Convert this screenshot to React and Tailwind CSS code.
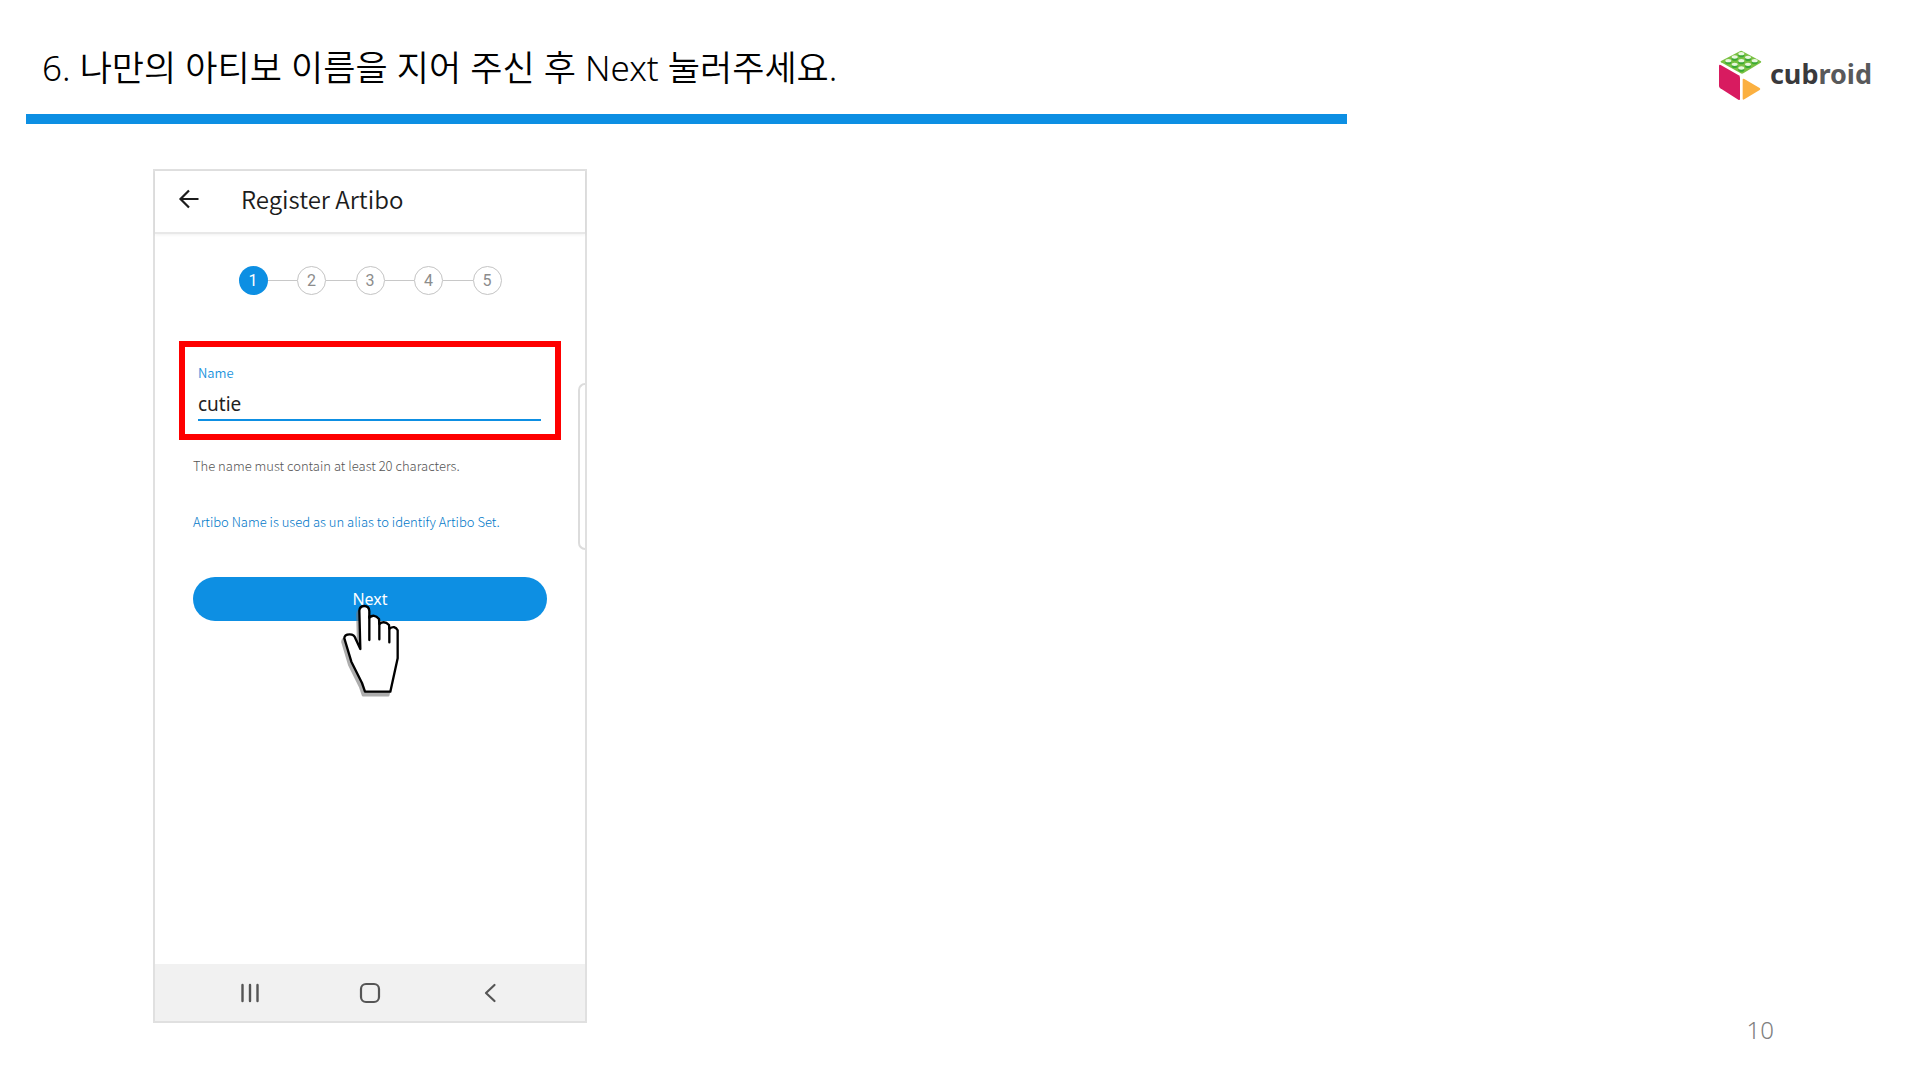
const STEPS = [1, 2, 3, 4, 5];

const CubroidLogo = () => (
  <div className="flex items-center gap-1">
    <svg viewBox="0 0 144 156" className="h-[52px] w-12" aria-hidden="true">
      <path d="M72 3 L129 34 Q131 36 128 38 L76 70 Q72 72 68 70 L9 37 Q6 35 9 33 L67 3 Q70 2 72 3 Z" fill="#7ac143" />
      {[[70, 11], [50, 21], [90, 22], [31, 32], [70, 32], [110, 32], [50, 43], [90, 43], [70, 54]].map(([x, y]) => (
        <g key={`${x}-${y}`}>
          <ellipse cx={x} cy={y + 5} rx="9" ry="6" fill="#39a935" />
          <ellipse cx={x} cy={y} rx="9" ry="5" fill="#e9f7df" />
        </g>
      ))}
      <path d="M8 45 L62 76 Q66 79 66 83 L66 147 Q66 152 61 149 L7 115 Q3 112 3 108 L3 48 Q3 43 8 45 Z" fill="#d81b60" />
      <path d="M79 87 L125 114 Q129 117 125 120 L79 148 Q74 151 74 146 L74 89 Q74 84 79 87 Z" fill="#fbb040" />
    </svg>
    <span className="pb-1 font-['Noto_Sans',sans-serif] text-[27px] leading-8 font-bold text-[#58595b]">
      <span className="text-[#3a3a3c]">cub</span>roid
    </span>
  </div>
);

const HandCursor = () => (
  <svg viewBox="0 0 180 285" className="pointer-events-none absolute top-[26px] left-[147px] h-[95px] w-[60px]" aria-hidden="true">
    <g strokeLinejoin="round" strokeLinecap="round" strokeWidth="7">
      <path
        d="M61 138 L58 23 Q59 9 73 9 Q87 9 88 24 L88 44 Q102 31 117 48 L118 63 Q133 51 147 66 L148 77 Q165 66 173 82 L173 166 L151 266 L75 266 L66 240 L34 176 L13 106 Q13 94 29 94 Q43 94 46 106 Z"
        transform="translate(-6 11)"
        fill="#777"
        stroke="#777"
        opacity="0.6"
      />
      <path
        d="M61 138 L58 23 Q59 9 73 9 Q87 9 88 24 L88 44 Q102 31 117 48 L118 63 Q133 51 147 66 L148 77 Q165 66 173 82 L173 166 L151 266 L75 266 L66 240 L34 176 L13 106 Q13 94 29 94 Q43 94 46 106 Z"
        fill="#fff"
        stroke="#000"
      />
      <path d="M88 40 V111 M118 58 V109 M148 74 V118" fill="none" stroke="#000" />
    </g>
  </svg>
);

/** Numbered circles joined by a thin line */
const Stepper = ({ current }) => (
  <ol className="mx-auto flex w-[263px] items-center font-[Roboto,sans-serif] text-base font-normal">
    {STEPS.map((step) => (
      <li key={step} className="flex items-center not-first:flex-1">
        {step > 1 && <span className="h-px flex-1 bg-[#c8c8c8]" />}
        <span
          className={
            step === current
              ? 'flex size-[29px] items-center justify-center rounded-full bg-[#0d8fe3] text-white'
              : 'flex size-[29px] items-center justify-center rounded-full border border-[#c4c4c4] text-[#8c8c8c]'
          }
        >
          {step}
        </span>
      </li>
    ))}
  </ol>
);

const NavBar = () => (
  <nav className="flex h-[57px] items-center justify-center gap-[92px] bg-[#f1f1f1] text-[#555]">
    <button type="button" aria-label="Recent apps">
      <svg viewBox="0 0 28 28" className="size-7" fill="none" stroke="currentColor" strokeWidth="2.4" strokeLinecap="round">
        <path d="M6.500 6 V22 M14 6 V22 M21.500 6 V22" />
      </svg>
    </button>
    <button type="button" aria-label="Home">
      <svg viewBox="0 0 28 28" className="size-7" fill="none" stroke="currentColor" strokeWidth="2.2">
        <rect x="5" y="5" width="18" height="18" rx="5" />
      </svg>
    </button>
    <button type="button" aria-label="Back">
      <svg viewBox="0 0 28 28" className="size-7" fill="none" stroke="currentColor" strokeWidth="2.2" strokeLinecap="round" strokeLinejoin="round">
        <path d="M18.500 6 L10 14 L18.500 22" />
      </svg>
    </button>
  </nav>
);

const PhoneScreen = () => (
  <section className="relative mb-[19px] flex w-[434px] flex-col border-2 border-[#e0e0e0] bg-white font-['Noto_Sans_CJK_KR',sans-serif] font-[350]">
    {/* App bar */}
    <div className="flex h-[63px] items-center gap-10 border-b-2 border-[#e8e8e8] pb-1.5 pl-[22px] shadow-[0_1px_3px_rgba(0,0,0,0.06)]">
      <button type="button" aria-label="Go back" className="text-[#1c1c1c]">
        <svg viewBox="0 0 24 24" className="size-6" fill="none" stroke="currentColor" strokeWidth="2.2">
          <path d="M21.500 12 H4 M12 3.500 L3.500 12 L12 20.500" />
        </svg>
      </button>
      <h2 className="text-2xl font-[350] text-[#1c1c1c]">Register Artibo</h2>
    </div>

    <div className="flex flex-1 flex-col pt-8">
      <Stepper current={1} />

      {/* Name field */}
      <div className="mx-6 mt-[46px] flex h-[99px] w-[382px] flex-col border-[6px] border-[#fe0000] pt-4 pr-3.5 pl-[13px]">
        <label htmlFor="name" className="text-[13px] leading-5 text-[#1b93dd]">Name</label>
        <input
          id="name"
          type="text"
          defaultValue="cutie"
          className="mt-[5px] h-[33px] w-full border-b-2 border-[#0d8fe3] font-['Noto_Sans',sans-serif] text-[19px] font-normal text-[#222] outline-none"
        />
      </div>

      <div className="px-[38px]">
        <p className="mt-4 text-[13px] leading-5 font-light text-[#555]">The name must contain at least 20 characters.</p>
        <p className="mt-9 text-[13px] leading-5 font-light text-[#0077c8]">Artibo Name is used as un alias to identify Artibo Set.</p>
        <div className="relative mt-[45px]">
          <button type="button" className="h-11 w-full rounded-full bg-[#0d8fe3] font-['Noto_Sans',sans-serif] text-base font-normal text-white">
            Next
          </button>
          <HandCursor />
        </div>
      </div>
    </div>

    <NavBar />

    {/* Edge panel handle */}
    <div className="absolute top-[212px] right-0 h-[167px] w-[7px] rounded-l-lg border-2 border-r-0 border-[#dcdcdc]" />
  </section>
);

const App = () => (
  <div className="flex min-h-screen flex-col bg-white">
    <header className="flex items-start pr-12 pl-[26px]">
      <div className="flex-1 pt-[39px]">
        <h1 className="pl-4 font-['Noto_Sans','Noto_Sans_CJK_KR',sans-serif] text-[35px] leading-[58px] font-[350] text-black">
          6. 나만의 아티보 이름을 지어 주신 후 Next 눌러주세요.
        </h1>
        <div className="mt-[17px] h-2.5 bg-[#0d8fe3]" />
      </div>
      <div className="ml-[371px] pt-[50px]">
        <CubroidLogo />
      </div>
    </header>

    <main className="flex flex-1 items-stretch justify-between pt-[45px] pr-[146px] pb-[38px] pl-[153px]">
      <PhoneScreen />
      <span className="self-end font-['Noto_Sans',sans-serif] text-2xl leading-6 font-light text-[#808080]">10</span>
    </main>
  </div>
);

export default App;
